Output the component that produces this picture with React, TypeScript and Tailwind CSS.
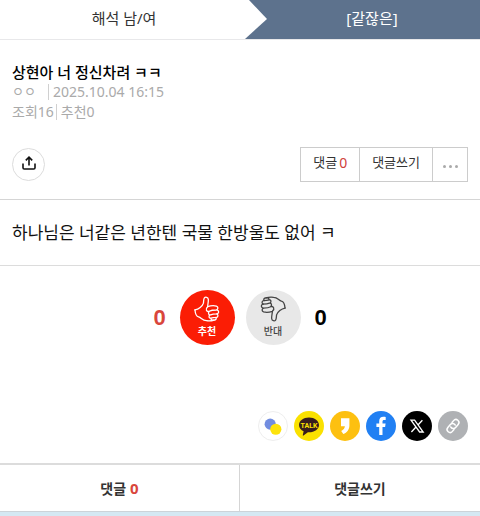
import type { ReactNode } from "react";

const shareItems: { label: string; className: string; icon: ReactNode }[] = [
  {
    label: "공유",
    className: "border border-[#eeeeee] bg-white",
    icon: (
      <svg viewBox="0 0 30 30" className="h-full w-full" aria-hidden="true">
        <circle cx="12" cy="13" r="6" fill="#728de0" />
        <circle cx="18" cy="18.5" r="6" fill="#fde30b" />
      </svg>
    ),
  },
  {
    label: "카카오톡",
    className: "bg-[#fae100]",
    icon: (
      <svg viewBox="0 0 30 30" className="h-full w-full" aria-hidden="true">
        <path
          d="M15 6.500c-5.600 0-10 3.300-10 7.500 0 2.700 1.900 5 4.600 6.300l-.8 3.800c-.1.500.3.700.7.400l4.400-3.200h1.100c5.600 0 10-3.300 10-7.300S20.600 6.500 15 6.500z"
          fill="#371d1e"
        />
        <text
          x="15"
          y="16.500"
          textAnchor="middle"
          fontSize="7"
          fontWeight="700"
          fontFamily="Roboto, sans-serif"
          fill="#fae100"
        >
          TALK
        </text>
      </svg>
    ),
  },
  {
    label: "카카오스토리",
    className: "bg-[#fdc010]",
    icon: (
      <svg viewBox="0 0 30 30" className="h-full w-full" aria-hidden="true">
        <path
          d="M11 7.200h8.400v7.300c0 4.100-2.300 7-6.100 8.600l-2.100-3.200c2.300-.9 3.400-2.300 3.700-4.600H11z"
          fill="#fff"
        />
      </svg>
    ),
  },
  {
    label: "페이스북",
    className: "bg-[#2180f3]",
    icon: (
      <svg viewBox="0 0 30 30" className="h-full w-full" aria-hidden="true">
        <path
          d="M13.200 24v-8h-2.800v-3.500h2.800v-2.300c0-2.900 1.600-4.400 4.200-4.400.9 0 1.700.1 2.300.2v3h-1.500c-1.300 0-1.700.7-1.700 1.700v1.800h3.100l-.5 3.500h-2.600v8z"
          fill="#fff"
        />
      </svg>
    ),
  },
  {
    label: "X",
    className: "bg-black",
    icon: (
      <svg viewBox="0 0 30 30" className="h-full w-full" aria-hidden="true">
        <path
          d="M9 9.200h3.600l8.600 11.800h-3.600zM9.400 21l4.800-5.300M20.400 9.200l-4.700 5.100"
          fill="none"
          stroke="#fff"
          strokeWidth="1.300"
        />
      </svg>
    ),
  },
  {
    label: "링크 복사",
    className: "bg-[#afb1b4]",
    icon: (
      <svg viewBox="0 0 30 30" className="h-full w-full" aria-hidden="true">
        <g
          transform="rotate(-50 15 15)"
          fill="none"
          stroke="#fff"
          strokeWidth="1.500"
          strokeLinecap="round"
        >
          <path d="M13 18h-2.500a3 3 0 0 1 0-6h4a3 3 0 0 1 2.700 4.200" />
          <path d="M17 12h2.500a3 3 0 0 1 0 6h-4a3 3 0 0 1-2.700-4.200" />
        </g>
      </svg>
    ),
  },
];

function ThumbIcon({ className }: { className: string }) {
  return (
    <svg
      viewBox="0 0 80 80"
      className={className}
      fill="none"
      stroke="currentColor"
      strokeWidth="4"
      strokeLinecap="round"
      strokeLinejoin="round"
      aria-hidden="true"
    >
      <path d="M3 43C14 41 26 32 29 22c1-7 0-12 3-16 3-4 11-3 12 4 1 8-2 15-2 23" />
      <path d="M3 43c1 11 6 20 11 21 8 2 12 12 24 12 8 1 18 0 24-2" />
      <path d="M42 33c8-3 20-4 27-2 6 2 6 10 0 12-9 0-15 0-22 4-8 3-14-6-5-14z" />
      <path d="M71 43c7 3 6 10 0 12-7 0-14 0-20 3-6 1-8-5-5-10" />
      <path d="M70 55c6 3 4 10-1 11-6 0-11 0-17 2-6 1-7-5-4-9" />
      <path d="M67 66c3 3 1 8-5 8-5 1-9 1-10-5" />
    </svg>
  );
}

function Header() {
  return (
    <header className="grid h-10 grid-cols-2 border-b border-[#e8e8ea] text-[15px]">
      <a href="#prev" className="flex items-center justify-center pb-0.5 pl-2 text-[#333]">
        해석 남/여
      </a>
      <a
        href="#next"
        className="relative flex items-center justify-center bg-[#5d728d] pb-0.5 pl-6 text-white"
      >
        <svg
          viewBox="0 0 27 39"
          className="absolute top-0 left-0 h-full w-[27px]"
          preserveAspectRatio="none"
          aria-hidden="true"
        >
          <path d="M0 0h9l18 19L5 39H0z" fill="#fff" />
        </svg>
        [같잖은]
      </a>
    </header>
  );
}

export default function App() {
  return (
    <div className="bg-white font-['Noto_Sans','Noto_Sans_CJK_KR',sans-serif] text-[#222]">
      <Header />

      <section className="border-b border-[#d5d5d5] px-3 pt-5 pb-[17px]">
        <h1 className="text-[15px] leading-6 font-medium text-black">상현아 너 정신차려 ㅋㅋ</h1>
        <div className="flex h-4 items-center text-[14px] text-[#aaa]">
          <span className="mr-3 text-[13px]">ㅇㅇ</span>
          <span className="border-l border-[#d0d0d0] pl-1 leading-4">2025.10.04 16:15</span>
        </div>
        <div className="mt-1 flex h-4 items-center text-[14px] leading-4 text-[#aaa]">
          <span className="mr-[2px]">조회16</span>
          <span className="border-l border-[#d0d0d0] pl-1">추천0</span>
        </div>

        <div className="mt-[27px] flex items-center justify-between">
          <button
            type="button"
            aria-label="공유하기"
            className="flex size-[33px] items-center justify-center rounded-full border border-[#dcdcdc]"
          >
            <svg
              viewBox="0 0 16 16"
              className="mb-1 size-4"
              fill="none"
              stroke="#111"
              strokeWidth="1.600"
              aria-hidden="true"
            >
              <path d="M2 8.500v4.200c0 .8.500 1.300 1.300 1.300h9.400c.8 0 1.300-.5 1.300-1.300V8.500" />
              <path d="M8 10.500V2.500M4.800 5.400L8 2.200l3.200 3.200" />
            </svg>
          </button>
          <div className="flex h-[35px] divide-x divide-[#ccc] border border-[#ccc] text-[13px] text-[#333]">
            <button type="button" className="flex items-center gap-[2px] px-3 pb-1">
              댓글<span className="text-[14px] text-[#d0403a]">0</span>
            </button>
            <button type="button" className="px-3 pb-1">
              댓글쓰기
            </button>
            <button
              type="button"
              aria-label="더보기"
              className="flex w-[34px] items-center justify-center gap-[3px] pt-1"
            >
              <span className="size-[3px] rounded-full bg-[#aaa]" />
              <span className="size-[3px] rounded-full bg-[#aaa]" />
              <span className="size-[3px] rounded-full bg-[#aaa]" />
            </button>
          </div>
        </div>
      </section>

      <p className="border-b border-[#dcdcdc] px-3 py-5 text-[17px] leading-[25px] text-[#111]">
        하나님은 너같은 년한텐 국물 한방울도 없어 ㅋ
      </p>

      <section className="flex items-center justify-center pt-6">
        <span className="w-6 text-center font-['Liberation_Sans',sans-serif] text-[22px] font-bold text-[#d9463c]">
          0
        </span>
        <button
          type="button"
          className="mr-[11px] ml-2 flex size-[55px] flex-col items-center rounded-full bg-[#fb1d05] pt-[6px] text-[10px] leading-3 font-bold text-white"
        >
          <ThumbIcon className="size-[26px] shrink-0" />
          <span className="mt-[3px]">추천</span>
        </button>
        <button
          type="button"
          className="mr-2 flex size-[55px] flex-col items-center rounded-full bg-[#e8e8e8] pt-[6px] text-[10px] leading-3 font-medium text-[#444]"
        >
          <ThumbIcon className="size-[26px] shrink-0 rotate-180" />
          <span className="mt-[3px]">반대</span>
        </button>
        <span className="w-6 text-center font-['Liberation_Sans',sans-serif] text-[22px] font-bold text-black">
          0
        </span>
      </section>

      <div className="flex justify-end gap-[6px] px-3 pt-[66px] pb-[22px]">
        {shareItems.map((item) => (
          <button
            key={item.label}
            type="button"
            aria-label={item.label}
            className={`size-[30px] overflow-hidden rounded-full ${item.className}`}
          >
            {item.icon}
          </button>
        ))}
      </div>

      <nav className="grid h-[48px] grid-cols-2 divide-x divide-[#d5d5d5] border-t-2 border-[#dcdcdc] text-[14px] font-bold text-[#333]">
        <a href="#comments" className="flex items-center justify-center gap-1">
          댓글<span className="text-[15px] text-[#d9463c]">0</span>
        </a>
        <a href="#write" className="flex items-center justify-center">
          댓글쓰기
        </a>
      </nav>
      <footer className="h-[5px] border-t border-[#ccd3d9] bg-[#d5e8f3]" />
    </div>
  );
}
